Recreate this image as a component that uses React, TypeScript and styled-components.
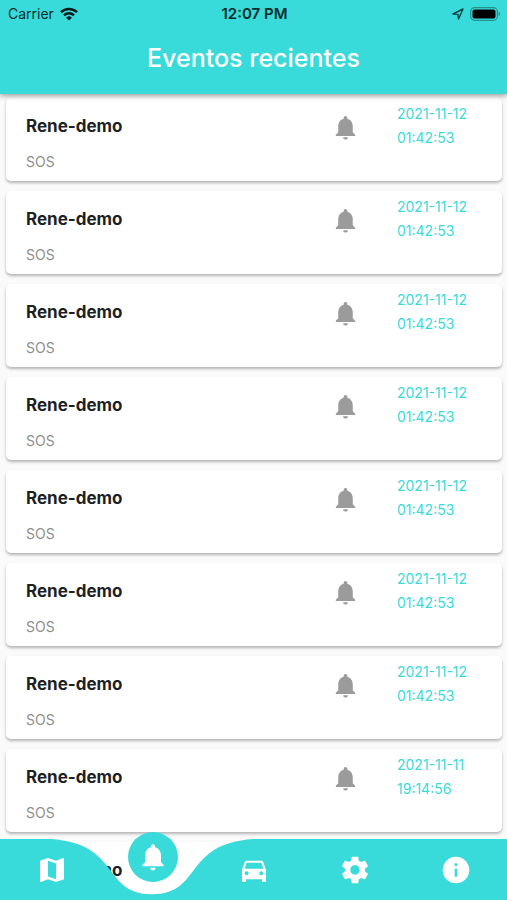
import React from "react";
import styled, { createGlobalStyle } from "styled-components";
import {
  MdDirectionsCar,
  MdInfo,
  MdMap,
  MdNotifications,
} from "react-icons/md";

const TEAL = "#38dbda";

const GlobalStyle = createGlobalStyle`
  *, *::before, *::after { box-sizing: border-box; }
  html, body, #root { height: 100%; }
  body {
    margin: 0;
    background: #fafafa;
    font-family: Inter, "Open Sans", sans-serif;
  }
  h1, h2, p, ul { margin: 0; padding: 0; }
  ul { list-style: none; }
`;

const Screen = styled.div`
  display: flex;
  flex-direction: column;
  height: 100%;
  overflow: hidden;
`;

const Header = styled.header`
  z-index: 1;
  flex: none;
  background: ${TEAL};
  box-shadow: 0 2px 5px rgba(0, 0, 0, 0.36);
`;

const StatusBar = styled.div`
  display: grid;
  grid-template-columns: 1fr auto 1fr;
  align-items: center;
  height: 26px;
  padding: 2px 6px 0 8px;
  color: #082c2d;
  font-size: 14px;
  line-height: 20px;
`;

const StatusGroup = styled.div<{ $end?: boolean }>`
  display: flex;
  align-items: center;
  justify-content: ${(p) => (p.$end ? "flex-end" : "flex-start")};
  gap: 6px;
`;

const Clock = styled.time`
  font-size: 15px;
  font-weight: 600;
`;

const Title = styled.h1`
  padding: 14px 16px 18px;
  color: #fff;
  font-size: 25px;
  font-weight: 500;
  line-height: 36px;
  text-align: center;
`;

const EventList = styled.ul`
  display: flex;
  flex: 1;
  flex-direction: column;
  gap: 10px;
  min-height: 0;
  padding: 4px 5px 64px 6px;
  overflow-y: auto;
  scrollbar-width: none;
`;

const EventCard = styled.li`
  display: grid;
  flex: none;
  grid-template-columns: 1fr 66px 105px;
  height: 83px;
  padding-left: 20px;
  border-radius: 5px;
  background: #fff;
  box-shadow: 0 2px 3px rgba(0, 0, 0, 0.28);
`;

const EventText = styled.div`
  padding-top: 16px;
`;

const EventName = styled.h2`
  color: #1f1f1f;
  font-size: 17px;
  font-weight: 700;
  line-height: 24px;
`;

const EventKind = styled.p`
  padding-top: 12px;
  color: #8e8e8e;
  font-size: 14px;
  line-height: 24px;
`;

const EventIcon = styled.div`
  padding-top: 15px;
  color: #9b9b9b;
  line-height: 0;
`;

const EventTime = styled.time`
  display: flex;
  flex-direction: column;
  padding-top: 4px;
  color: ${TEAL};
  font-size: 14px;
  line-height: 24px;
`;

const BottomBar = styled.nav`
  position: fixed;
  right: 0;
  bottom: 0;
  left: 0;
  height: 61px;
`;

const BarShape = styled.svg`
  position: absolute;
  inset: 0;
  width: 100%;
  height: 61px;
  fill: ${TEAL};
`;

const Tabs = styled.div`
  position: relative;
  display: grid;
  grid-template-columns: repeat(5, 1fr);
  height: 100%;
  padding-left: 1px;
`;

const Tab = styled.button`
  display: flex;
  align-items: center;
  justify-content: center;
  padding: 0;
  border: 0;
  background: none;
  color: #fff;
  cursor: pointer;
`;

const ActiveTab = styled(Tab)`
  justify-self: center;
  width: 50px;
  height: 50px;
  margin-top: -7px;
  border-radius: 50%;
  background: ${TEAL};
`;

const events = [
  ...Array.from({ length: 7 }, () => ({ date: "2021-11-12", time: "01:42:53" })),
  { date: "2021-11-11", time: "19:14:56" },
  { date: "2021-11-11", time: "19:14:56" },
];

const WifiIcon = () => (
  <svg width="18" height="14" viewBox="0 0 18 14" fill="none" stroke="#071b1c" strokeWidth="2.5" aria-hidden="true">
    <path d="M1 5.2a11.4 11.4 0 0 1 16 0" />
    <path d="M4 8.4a7.1 7.1 0 0 1 10 0" />
    <path d="M9 13.6 6.1 10.7a4.1 4.1 0 0 1 5.8 0Z" fill="#071b1c" stroke="none" />
  </svg>
);

const LocationIcon = () => (
  <svg width="12" height="12" viewBox="0 0 12 12" fill="none" stroke="#0b4546" strokeWidth="1.4" strokeLinejoin="round" aria-hidden="true">
    <path d="M1 6 11 1 6.5 11 6 6.4Z" />
  </svg>
);

const BatteryIcon = () => (
  <svg width="31" height="14" viewBox="0 0 31 14" aria-hidden="true">
    <rect x="0.7" y="0.7" width="26.6" height="12.6" rx="3.8" fill="none" stroke="#24908f" strokeWidth="1.2" />
    <rect x="2.5" y="2.4" width="23" height="9.2" rx="2" fill="#000" />
    <path d="M28.6 4.8c1.8.6 1.8 3.8 0 4.4Z" fill="#24908f" />
  </svg>
);

const GearIcon = () => (
  <svg width="32" height="32" viewBox="0 0 24 24" fill="currentColor" aria-hidden="true">
    <path d="M19.43 12.98c.04-.32.07-.64.07-.98s-.03-.66-.07-.98l2.11-1.65c.19-.15.24-.42.12-.64l-2-3.46c-.12-.22-.39-.3-.61-.22l-2.49 1c-.52-.4-1.08-.73-1.69-.98l-.38-2.65C14.46 2.18 14.25 2 14 2h-4c-.25 0-.46.18-.49.42l-.38 2.65c-.61.25-1.17.59-1.69.98l-2.49-1c-.23-.09-.49 0-.61.22l-2 3.46c-.13.22-.07.49.12.64l2.11 1.65c-.04.32-.07.65-.07.98s.03.66.07.98l-2.11 1.65c-.19.15-.24.42-.12.64l2 3.46c.12.22.39.3.61.22l2.49-1c.52.4 1.08.73 1.69.98l.38 2.65c.03.24.24.42.49.42h4c.25 0 .46-.18.49-.42l.38-2.65c.61-.25 1.17-.59 1.69-.98l2.49 1c.23.09.49 0 .61-.22l2-3.46c.12-.22.07-.49-.12-.64l-2.11-1.65zM12 15.5c-1.93 0-3.5-1.57-3.5-3.5s1.57-3.5 3.5-3.5 3.5 1.57 3.5 3.5-1.57 3.5-3.5 3.5z" />
  </svg>
);

export default function App() {
  return (
    <Screen>
      <GlobalStyle />
      <Header>
        <StatusBar>
          <StatusGroup>
            <span>Carrier</span>
            <WifiIcon />
          </StatusGroup>
          <Clock>12:07 PM</Clock>
          <StatusGroup $end>
            <LocationIcon />
            <BatteryIcon />
          </StatusGroup>
        </StatusBar>
        <Title>Eventos recientes</Title>
      </Header>
      <EventList>
        {events.map((event, i) => (
          <EventCard key={i}>
            <EventText>
              <EventName>Rene-demo</EventName>
              <EventKind>SOS</EventKind>
            </EventText>
            <EventIcon>
              <MdNotifications size={29} />
            </EventIcon>
            <EventTime dateTime={`${event.date}T${event.time}`}>
              <span>{event.date}</span>
              <span>{event.time}</span>
            </EventTime>
          </EventCard>
        ))}
      </EventList>
      <BottomBar>
        <BarShape viewBox="0 0 500 61" preserveAspectRatio="none" aria-hidden="true">
          <path d="M0 0H50C120 4.6 100 55.2 150 55.2C200 55.2 180 4.6 250 0H500V92H0Z" />
        </BarShape>
        <Tabs>
          <Tab type="button" aria-label="Mapa">
            <MdMap size={32} />
          </Tab>
          <ActiveTab type="button" aria-label="Eventos" aria-current="page">
            <MdNotifications size={32} />
          </ActiveTab>
          <Tab type="button" aria-label="Vehículos">
            <MdDirectionsCar size={32} />
          </Tab>
          <Tab type="button" aria-label="Ajustes">
            <GearIcon />
          </Tab>
          <Tab type="button" aria-label="Información">
            <MdInfo size={32} />
          </Tab>
        </Tabs>
      </BottomBar>
    </Screen>
  );
}
